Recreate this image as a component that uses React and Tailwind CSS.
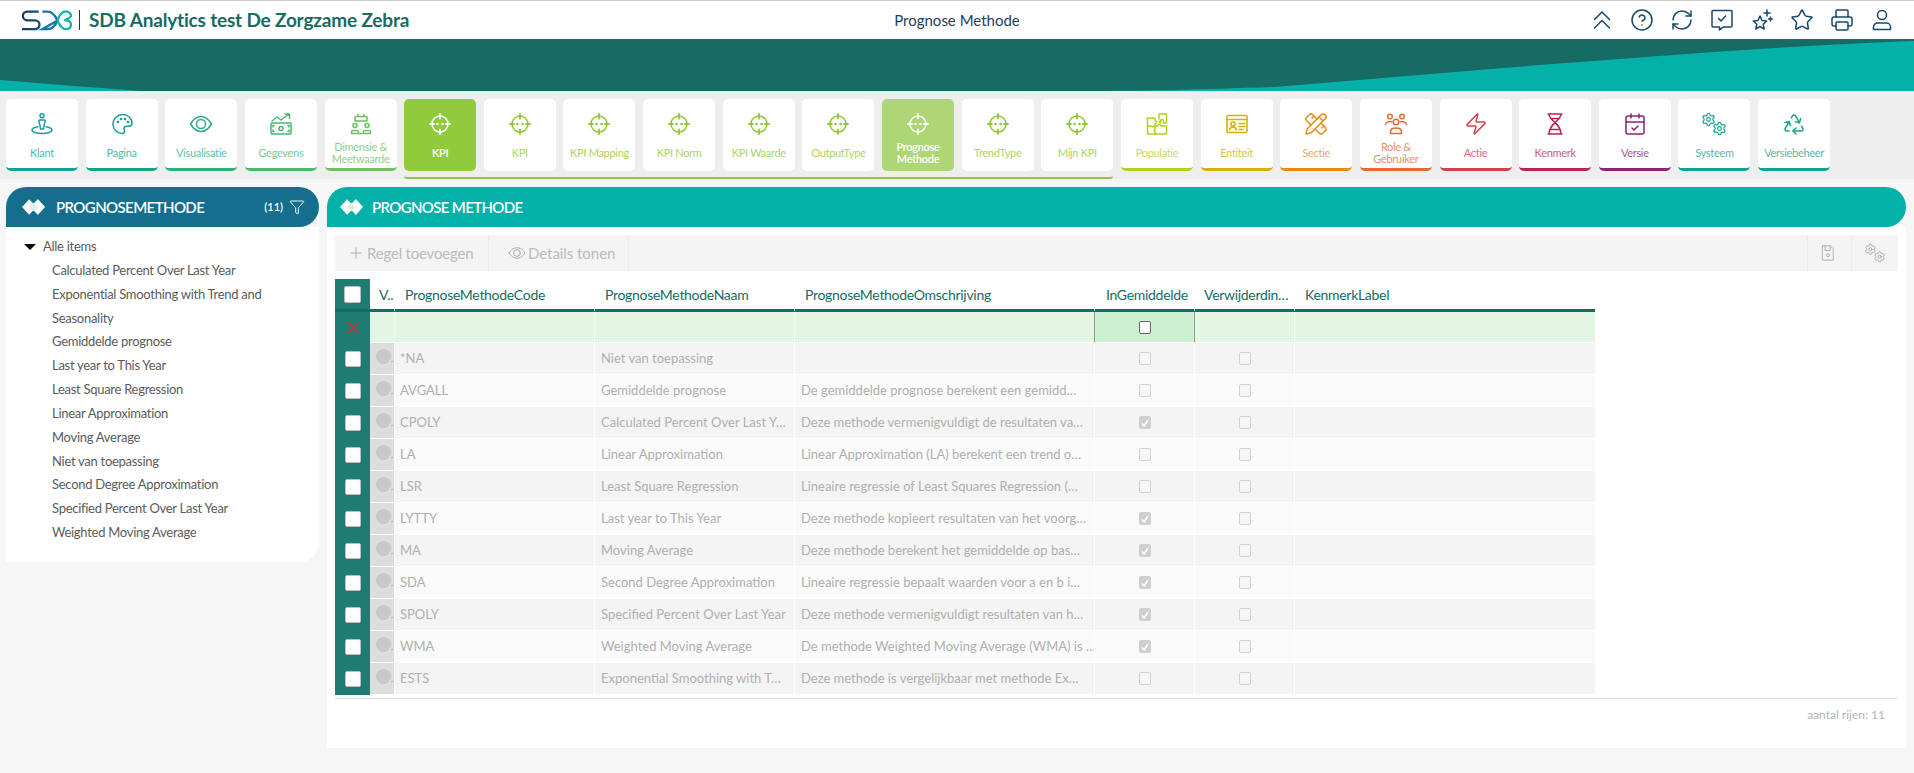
import React from "react";
import { CircleHelp, RefreshCw, Star, Printer, PencilRuler, Zap, CalendarCheck, Recycle, Settings, Funnel, Plus } from "lucide-react";

const S = ({ children, className = "", sw = 1.5 }) => (
  <svg viewBox="0 0 24 24" fill="none" stroke="currentColor" strokeWidth={sw} strokeLinecap="round" strokeLinejoin="round" className={className} overflow="visible">
    {children}
  </svg>
);

const Klant = () => (
  <>
    <circle cx="12" cy="3.8" r="2" />
    <path d="M9.7 8h4.6c.7 0 1 .5.9 1.1l-1.2 4.4-.5 3.5h-3l-.5-3.5-1.2-4.4C8.700 8.500 9 8 9.700 8z" />
    <path d="M8 14.700C4.500 15.300 2 16.500 2 18c0 1.900 4.500 3.500 10 3.500S22 19.900 22 18c0-1.500-2.500-2.700-6-3.300" />
  </>
);
const Pal = () => (
  <>
    <path d="M13 2.500C7.500 2.500 3 6.800 3 12.200c0 5.300 4 9.300 9 9.300 1.700 0 2.600-1 2.600-2.300 0-1-.6-1.700-.6-2.700 0-1.300 1-2.300 2.500-2.300H19c1.800 0 3-1.200 3-3 0-4.700-4-8.700-9-8.700z" />
    <circle cx="8" cy="10" r=".6" fill="currentColor" /><circle cx="11" cy="7" r=".6" fill="currentColor" /><circle cx="15" cy="7" r=".6" fill="currentColor" /><circle cx="18" cy="10" r=".6" fill="currentColor" />
  </>
);
const EyeI = () => (
  <>
    <path d="M1.500 12C4.500 7 8 4.500 12 4.500S19.500 7 22.500 12c-3 5-6.500 7.500-10.500 7.500S4.500 17 1.500 12z" />
    <circle cx="12" cy="12" r="4.600" />
  </>
);
const Geg = () => (
  <>
    <rect x="2" y="11" width="20" height="11" rx="1" />
    <circle cx="12" cy="16.500" r="2" />
    <path d="M5 13.500H4v1.500M19 13.500h1V15M5 19.500H4V18M19 19.500h1V18" />
    <path d="M3 9l5-4 4 3 8-6M16 2h4.500v4.500" />
  </>
);
const Dim = () => (
  <>
    <path d="M7 4.500h10a1 1 0 011 1V9H6V5.500a1 1 0 011-1zM9 2.500v2M15 2.500v2" />
    <circle cx="6" cy="13.500" r="2" /><circle cx="18" cy="13.500" r="2" />
    <path d="M2.500 21.500V20a1.500 1.500 0 011.500-1.500h4A1.500 1.500 0 019.500 20v1.500zM14.500 21.500V20a1.500 1.500 0 011.500-1.500h4a1.500 1.500 0 011.500 1.500v1.500zM11 21.500h2" />
  </>
);
const Kpi = () => (
  <>
    <circle cx="12" cy="12" r="8" />
    <path d="M12 2v4.500M12 17.500V22M2 12h4M18 12h4" strokeWidth="1.800" />
    <circle cx="9.500" cy="12" r=".6" fill="currentColor" /><circle cx="14.500" cy="12" r=".6" fill="currentColor" />
  </>
);
const Puzzle = () => (
  <>
    <path d="M2.500 6H10v2.500a1.800 1.800 0 010 3.500v2h2.500a1.800 1.800 0 013.500 0h5.500v8h-19z" />
    <path d="M2.500 14H6a1.800 1.800 0 003 0h1M10 14v2.500a1.800 1.800 0 000 3V22" />
    <path d="M14 7V2h7.500v9H18.500V8.500a1.700 1.700 0 00-3 0V11L14 9.500" />
  </>
);
const Ent = () => (
  <>
    <rect x="2" y="3.500" width="20" height="17" rx="1" />
    <path d="M2 7.500h20M14 11.500h6M14 14.500h6M14 17.500h4" />
    <circle cx="8" cy="12" r="2.100" />
    <path d="M4.500 18c.4-2 1.900-2.800 3.500-2.800s3.100.8 3.500 2.800" />
  </>
);
const Role = () => (
  <>
    <circle cx="6" cy="4.500" r="2.300" /><circle cx="18" cy="4.500" r="2.300" /><circle cx="12" cy="10" r="2.800" />
    <path d="M1.500 12.500c.5-2 2-3 4.500-3 .7 0 1.300.1 1.800.3M22.500 12.500c-.5-2-2-3-4.500-3-.7 0-1.300.1-1.800.3" />
    <path d="M6.500 21.500v-1.800c0-2.200 2.300-3.700 5.500-3.700s5.500 1.500 5.500 3.700v1.800z" />
  </>
);
const Dna = () => (
  <path d="M5 2h14M5 22h14M6 2c0 7 12 9 12 20M18 2C18 9 6 11 6 22M7.500 6.500h9M7.500 17.500h9" />
);
const Gears = () => (
  <>
    <Settings x="-1" y="0" width="15" height="15" strokeWidth="1.900" />
    <Settings x="10" y="9" width="15" height="15" strokeWidth="1.900" />
  </>
);

const nav = [
  ["Klant", Klant, "#1a9aa4", "#1c9c96"],
  ["Pagina", Pal, "#169d94", "#16a085"],
  ["Visualisatie", EyeI, "#26ab8b", "#2fb07a"],
  ["Gegevens", Geg, "#4cb672", "#4fb96b"],
  ["Dimensie & Meetwaarde", Dim, "#6cbf62", "#6fc15f"],
];
const kpi = ["KPI", "KPI", "KPI Mapping", "KPI Norm", "KPI Waarde", "OutputType", "Prognose Methode", "TrendType", "Mijn KPI"];
const nav2 = [
  ["Populatie", Puzzle, "#b5cf1c", "#b5cf1c"],
  ["Entiteit", Ent, "#d8ae00", "#d8ae00"],
  ["Sectie", null, "#e88b14", "#e88b14"],
  ["Role & Gebruiker", Role, "#e46a36", "#e46a36"],
  ["Actie", null, "#d24050", "#d24050"],
  ["Kenmerk", Dna, "#b8255e", "#b8255e"],
  ["Versie", null, "#8e2272", "#8e2272"],
  ["Systeem", Gears, "#14a090", "#14a090"],
  ["Versiebeheer", null, "#12a38c", "#12a38c"],
];

const lucideFor = { Sectie: PencilRuler, Actie: Zap, Versie: CalendarCheck, Versiebeheer: Recycle };

function Card({ label, Icon, color, bar, active, faded }) {
  const Lu = lucideFor[label];
  const bg = active ? (faded ? "#add675" : "#91cb3d") : "#fff";
  return (
    <div
      className="w-[72px] h-[72px] shrink-0 rounded-[5px] flex flex-col items-center pt-[13px]"
      style={{ background: bg, borderBottom: bar ? `3px solid ${bar}` : "0", color: active ? "#fff" : color }}
    >
      <div className="w-6 h-6 shrink-0">
        {Lu ? <Lu size={24} strokeWidth={1.5} /> : <S><Icon /></S>}
      </div>
      <div className={`mt-[4px] h-[25px] w-[70px] flex items-center justify-center text-center text-[11px] leading-[12px] tracking-[-0.3px] ${active ? "opacity-100 font-semibold" : "opacity-75"}`}>
        {label}
      </div>
    </div>
  );
}

const Diamonds = () => (
  <svg viewBox="0 0 24 16" className="w-[23px] h-[16px]" fill="#fff">
    <path d="M7.500 0L15 8l-7.500 8L0 8z" />
    <path d="M16.500 0L24 8l-7.500 8L9 8z" stroke="#ffffff88" strokeWidth=".6" />
    <path d="M12 3.500l4.500 4.500L12 12.500 7.500 8z" fill="#d8efec" />
  </svg>
);

const rows = [
  ["*NA", "Niet van toepassing", "", 0],
  ["AVGALL", "Gemiddelde prognose", "De gemiddelde prognose berekent een gemidd…", 0],
  ["CPOLY", "Calculated Percent Over Last Y…", "Deze methode vermenigvuldigt de resultaten va…", 1],
  ["LA", "Linear Approximation", "Linear Approximation (LA) berekent een trend o…", 0],
  ["LSR", "Least Square Regression", "Lineaire regressie of Least Squares Regression (…", 0],
  ["LYTTY", "Last year to This Year", "Deze methode kopieert resultaten van het voorg…", 1],
  ["MA", "Moving Average", "Deze methode berekent het gemiddelde op bas…", 1],
  ["SDA", "Second Degree Approximation", "Lineaire regressie bepaalt waarden voor a en b i…", 1],
  ["SPOLY", "Specified Percent Over Last Year", "Deze methode vermenigvuldigt resultaten van h…", 1],
  ["WMA", "Weighted Moving Average", "De methode Weighted Moving Average (WMA) is …", 1],
  ["ESTS", "Exponential Smoothing with T…", "Deze methode is vergelijkbaar met methode Ex…", 0],
];

const items = [
  "Calculated Percent Over Last Year",
  "Exponential Smoothing with Trend and Seasonality",
  "Gemiddelde prognose",
  "Last year to This Year",
  "Least Square Regression",
  "Linear Approximation",
  "Moving Average",
  "Niet van toepassing",
  "Second Degree Approximation",
  "Specified Percent Over Last Year",
  "Weighted Moving Average",
];

const Box = ({ checked }) => (
  <div className={`w-[12px] h-[13px] rounded-[2px] border flex items-center justify-center ${checked ? "bg-[#cfcfcf] border-[#cfcfcf]" : "bg-[#f6f6f6] border-[#d2d2d2]"}`}>
    {checked ? (
      <svg viewBox="0 0 12 12" className="w-[10px] h-[10px]" fill="none" stroke="#fff" strokeWidth="2"><path d="M2.500 6.500L5 9.500l4.500-7" /></svg>
    ) : null}
  </div>
);

const hc = "h-full flex items-center whitespace-nowrap border-b-[3px] border-b-[#176b65] border-r border-r-white";

export default function App() {
  return (
    <div className="w-full min-h-screen bg-[#f6f6f6] font-['Lato',sans-serif] overflow-hidden">
      {/* top bar */}
      <header className="h-[39px] bg-white border-t border-[#cccccc] grid grid-cols-[1fr_auto_1fr] items-center">
        <div className="flex items-center pl-[21px]">
          <svg viewBox="0 0 49 20" className="w-[51px] h-[21px]" fill="none" strokeWidth="2.200">
            <defs>
              <linearGradient id="lg" x1="0" x2="1" y1="0" y2="0">
                <stop offset="0" stopColor="#123a5c" />
                <stop offset="1" stopColor="#174f7c" />
              </linearGradient>
            </defs>
            <path stroke="url(#lg)" d="M17 1.500H6a4 4 0 000 8.300h7.500a4 4 0 010 8.500H1" />
            <path stroke="#1777a8" d="M20.500 1.500h5c5 0 7.500 4 9.500 8.500M35 10c-2 5.300-4.500 8.300-9.500 8.300h-5z" />
            <path stroke="#12b5a6" d="M35 10c2 4.500 4 8.300 8 8.300s5-2 5-4.300-2-4.200-5-4.200 5-2 5-4.200-2-4.300-5-4.300-6 3-8 8.500" />
          </svg>
          <div className="w-px h-5 bg-[#333] ml-[7px] mr-[9px]" />
          <div className="text-[19px] font-bold text-[#176b65] tracking-[-0.18px] whitespace-nowrap">SDB Analytics test De Zorgzame Zebra</div>
        </div>
        <div className="text-[15px] text-[#1c3f5a]">Prognose Methode</div>
        <div className="flex items-center justify-end gap-4 pr-5 text-[#17486a]">
          <S className="w-6 h-6"><path d="M4.500 11.500L12 4l7.500 7.500M4.500 20L12 12.500l7.500 7.500" /></S>
          <CircleHelp size={24} strokeWidth={1.5} />
          <RefreshCw size={24} strokeWidth={1.5} />
          <S className="w-6 h-6"><path d="M3 2.500h18a1 1 0 011 1V18a1 1 0 01-1 1h-8l-3.500 3v-3H3a1 1 0 01-1-1V3.500a1 1 0 011-1z" /><path d="M8.500 10.500l2.500 2.500 4.500-5" /></S>
          <S className="w-6 h-6"><path d="M10 8l2 4.500 4.700.5-3.500 3.200 1 4.800-4.200-2.500L5.800 21l1-4.800L3.300 13l4.700-.5z" /><path d="M17 2v6M14 5h6M20.500 9v4M18.500 11h4" /></S>
          <Star size={24} strokeWidth={1.5} />
          <Printer size={24} strokeWidth={1.5} />
          <S className="w-6 h-6"><circle cx="12" cy="7" r="4.500" /><path d="M3.500 21.500V19a4 4 0 014-4h9a4 4 0 014 4v2.500z" /></S>
        </div>
      </header>

      {/* band */}
      <div className="h-[52px] bg-[#176b65]">
        <svg viewBox="0 0 1914 52" preserveAspectRatio="none" className="block w-full h-full" fill="#04b1a8">
          <path d="M0 41C50 45 100 49 140 52H0z" />
          <path d="M1914 2C1750 8 1550 25 1274 48C1200 50.500 1150 52 1100 52H1914z" />
        </svg>
      </div>

      {/* nav */}
      <nav className="h-[88px] bg-[#eeeeee] pt-2 pl-[6px] flex gap-[7.65px]">
        {nav.map(([l, I, c, b]) => <Card key={l} label={l} Icon={I} color={c} bar={b} />)}
        <div className="flex gap-[7.65px] h-[80px] border-b-2 border-[#91cb3d] rounded-bl-[3px] rounded-br-[3px]">
          {kpi.map((l, i) => (
            <Card key={l + i} label={l} Icon={Kpi} color="#8cc832" active={i === 0 || i === 6} faded={i === 6} />
          ))}
        </div>
        {nav2.map(([l, I, c, b]) => <Card key={l} label={l} Icon={I} color={c} bar={b} />)}
      </nav>

      {/* main */}
      <main className="flex gap-2 pt-2 pl-[6px]">
        <aside className="w-[313px] shrink-0">
          <div className="h-10 bg-[#146e8d] rounded-tl-[20px] rounded-r-[20px] flex items-center pl-4 pr-[14px] text-white">
            <Diamonds />
            <div className="ml-[11px] text-[15px] font-semibold tracking-[-0.6px]">PROGNOSEMETHODE</div>
            <div className="ml-auto text-[11px] font-semibold">(11)</div>
            <Funnel size={16} strokeWidth={1.4} className="ml-[6px]" />
          </div>
          <div className="h-[335px] bg-white rounded-br-[20px] pt-2 pl-[18px] pr-4 text-[13px] leading-[23.85px] tracking-[-0.28px] text-[#5b5b5b]">
            <div className="flex items-center">
              <span className="w-0 h-0 border-x-[6px] border-x-transparent border-t-[6px] border-t-black" />
              <span className="ml-[7px]">Alle items</span>
            </div>
            <ul className="pl-[28px]">
              {items.map((t) => <li key={t}>{t}</li>)}
            </ul>
          </div>
        </aside>

        <section className="w-[1579px] shrink-0">
          <div className="h-10 bg-[#04b1a8] rounded-tl-[20px] rounded-r-[20px] flex items-center pl-[13px] text-white">
            <Diamonds />
            <div className="ml-[9px] text-[15px] font-semibold tracking-[-0.65px]">PROGNOSE METHODE</div>
          </div>
          <div className="h-[521px] bg-white pt-2 px-2">
            {/* toolbar */}
            <div className="h-9 bg-[#f4f4f4] flex items-center text-[15px] text-[#bbbbbb] tracking-[-0.2px]">
              <div className="w-[154px] h-full flex items-center pl-[12px] border-r border-[#ebebeb]">
                <Plus size={18} strokeWidth={1.2} className="text-[#aaaaaa]" />
                <span className="ml-[2px]">Regel toevoegen</span>
              </div>
              <div className="w-[140px] h-full flex items-center pl-[19px] border-r border-[#ebebeb]">
                <S className="w-[18px] h-[18px] text-[#aaaaaa]" sw={1.3}><path d="M1.500 12C4.500 7 8 5 12 5s7.500 2 10.500 7c-3 5-6.500 7-10.500 7S4.500 17 1.500 12z" /><circle cx="12" cy="12" r="4.500" /></S>
                <span className="ml-[2px] tracking-[-0.05px]">Details tonen</span>
              </div>
              <div className="ml-auto w-[44px] h-full flex items-center justify-center pr-1 border-l border-[#ebebeb]">
                <S className="w-[18px] h-[18px] text-[#aaaaaa]" sw={1.2}><path d="M5 2.500h10l4 4v15H5z" /><path d="M8 2.500v6h7v-6" /><circle cx="12" cy="15" r="2" /></S>
              </div>
              <div className="w-[47px] h-full flex items-center justify-center border-l border-[#ebebeb]">
                <S className="w-[20px] h-[20px] text-[#aaaaaa]" sw={1.2}><Gears /></S>
              </div>
            </div>

            {/* table */}
            <div className="mt-2 text-[13px]">
              <div className="flex h-[33px] text-[#176b65] text-[14px] tracking-[-0.3px] w-[1260px]">
                <div className="w-[35px] h-full bg-[#1f7c73] border-b-[3px] border-b-[#176b65] flex items-center justify-center">
                  <div className="w-[17px] h-[17px] bg-white rounded-[2px] border border-[#bdbdbd]" />
                </div>
                <div className={`w-[25px] pl-[9px] ${hc}`}>V..</div>
                <div className={`w-[200px] pl-[10px] ${hc}`}>PrognoseMethodeCode</div>
                <div className={`w-[200px] pl-[10px] ${hc}`}>PrognoseMethodeNaam</div>
                <div className={`w-[300px] pl-[10px] ${hc}`}>PrognoseMethodeOmschrijving</div>
                <div className={`w-[100px] pl-[11px] ${hc}`}>InGemiddelde</div>
                <div className={`w-[100px] pl-[9px] ${hc}`}>Verwijderdin…</div>
                <div className="w-[300px] h-full pl-[10px] flex items-center border-b-[3px] border-b-[#176b65]">KenmerkLabel</div>
              </div>

              <div className="flex h-[31px] w-[1260px]">
                <div className="w-[35px] bg-[#1f7c73] flex items-center justify-center">
                  <svg viewBox="0 0 14 14" className="w-[14px] h-[14px]" fill="none" stroke="#f0262c" strokeWidth="1.300"><path d="M1.500 1.500l11 11M12.500 1.500l-11 11" /></svg>
                </div>
                <div className="w-[25px] bg-[#e2f6e3] border-r border-b border-white" />
                <div className="w-[200px] bg-[#e2f6e3] border-r border-b border-white" />
                <div className="w-[200px] bg-[#e2f6e3] border-r border-b border-white" />
                <div className="w-[300px] bg-[#e2f6e3] border-r border-b border-[#999999] border-b-white" />
                <div className="w-[100px] bg-[#cdf0d0] border-r border-b border-[#999999] border-b-white flex items-center justify-center">
                  <div className="w-[12px] h-[13px] bg-white rounded-[2px] border border-[#666666]" />
                </div>
                <div className="w-[100px] bg-[#e2f6e3] border-r border-b border-white" />
                <div className="w-[300px] bg-[#e2f6e3] border-b border-white" />
              </div>

              {rows.map(([code, naam, oms, chk], i) => {
                const bg = i % 2 ? "bg-[#fafafa]" : "bg-[#f4f4f4]";
                const cell = `${bg} h-full border-r border-b border-white text-[#b0b0b0] flex items-center whitespace-nowrap overflow-hidden`;
                return (
                  <div key={code} className="flex h-8 w-[1260px]">
                    <div className="w-[35px] bg-[#1f7c73] flex items-center justify-center">
                      <div className="w-4 h-4 bg-white rounded-[2px] border border-[#bdbdbd]" />
                    </div>
                    <div className="w-[25px] bg-[#dddddd] h-full border-r border-b border-white flex items-center pl-[6px]">
                      <div className="w-[15px] h-[15px] rounded-full bg-[#c8c8c8] -mt-1" />
                      <span className="text-[#1777a8] text-[8px] leading-none self-end mb-[11px]">.</span>
                    </div>
                    <div className={`w-[200px] pl-[5px] ${cell}`}>{code}</div>
                    <div className={`w-[200px] pl-[6px] ${cell}`}>{naam}</div>
                    <div className={`w-[300px] pl-[6px] ${cell}`}>{oms}</div>
                    <div className={`w-[100px] justify-center ${cell}`}><Box checked={chk} /></div>
                    <div className={`w-[100px] justify-center ${cell}`}><Box /></div>
                    <div className={`w-[300px] ${bg} h-full border-b border-white`} />
                  </div>
                );
              })}

              <div className="mt-[3px] h-px bg-[#dddddd]" />
              <div className="mt-[7px] pr-[13px] text-right text-[12px] text-[#b5b5b5]">aantal rijen: 11</div>
            </div>
          </div>
        </section>
      </main>
    </div>
  );
}
